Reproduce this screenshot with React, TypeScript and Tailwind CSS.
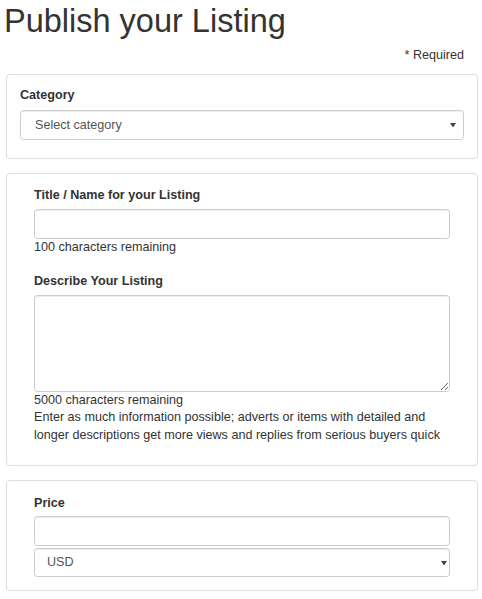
function Caret({ className }: { className: string }) {
	return (
		<svg
			className={`pointer-events-none absolute top-1/2 -translate-y-1/2 ${className}`}
			width="6"
			height="5"
			viewBox="0 0 6 5"
		>
			<path d="M0 0.5H6L3 5Z" fill="#444" />
		</svg>
	)
}

const inputCls =
	"block w-full rounded-[3.5px] border border-[#ccc] bg-white px-[11px] text-[12.6px] text-[#555] shadow-[inset_0_1px_1px_rgba(0,0,0,0.075)] outline-none"

export default function App() {
	return (
		<main className="min-h-screen bg-white pl-[6px] pr-[4px] font-['Liberation_Sans',Arial,sans-serif] text-[#333]">
			<h1 className="-ml-[2px] pt-[4px] text-[32.5px] font-normal leading-[35px]">
				Publish your Listing
			</h1>
			<p className="mt-[7px] pr-[14px] text-right text-[12.6px] leading-[18px]">
				* Required
			</p>

			<section className="mt-[10px] rounded-[4px] border border-[#ddd] px-[13px] pt-[11px] pb-[18px]">
				<label className="mb-[6px] block text-[12.6px] font-bold leading-[18px]">
					Category
				</label>
				<div className="relative">
					<select className={`${inputCls} h-[30px] appearance-none pl-[14px]`} defaultValue="">
						<option value="">Select category</option>
					</select>
					<Caret className="right-[8px]" />
				</div>
			</section>

			<section className="mt-[14px] rounded-[4px] border border-[#ddd] px-[27px] pt-[12px] pb-[21px]">
				<label className="mb-[5px] block text-[12.6px] font-bold leading-[18px]">
					Title / Name for your Listing
				</label>
				<input type="text" className={`${inputCls} h-[30px]`} />
				<p className="text-[12.6px] leading-[17.5px]">100 characters remaining</p>

				<label className="mt-[15px] mb-[5px] block text-[12.6px] font-bold leading-[18px]">
					Describe Your Listing
				</label>
				<textarea className={`${inputCls} h-[97px] py-[5px]`} />
				<p className="text-[12.6px] leading-[17.5px]">5000 characters remaining</p>
				<p className="text-[12.6px] leading-[17.5px]">
					Enter as much information possible; adverts or items with detailed and longer
					descriptions get more views and replies from serious buyers quick
				</p>
			</section>

			<section className="mt-[14px] rounded-[4px] border border-[#ddd] px-[27px] pt-[13px] pb-[13px]">
				<label className="mb-[4px] block text-[12.6px] font-bold leading-[18px]">
					Price
				</label>
				<input type="text" className={`${inputCls} h-[30px]`} />
				<div className="relative mt-[2px]">
					<select className={`${inputCls} h-[29px] appearance-none pl-[12px]`} defaultValue="USD">
						<option value="USD">USD</option>
					</select>
					<Caret className="right-[3px]" />
				</div>
			</section>
		</main>
	)
}
